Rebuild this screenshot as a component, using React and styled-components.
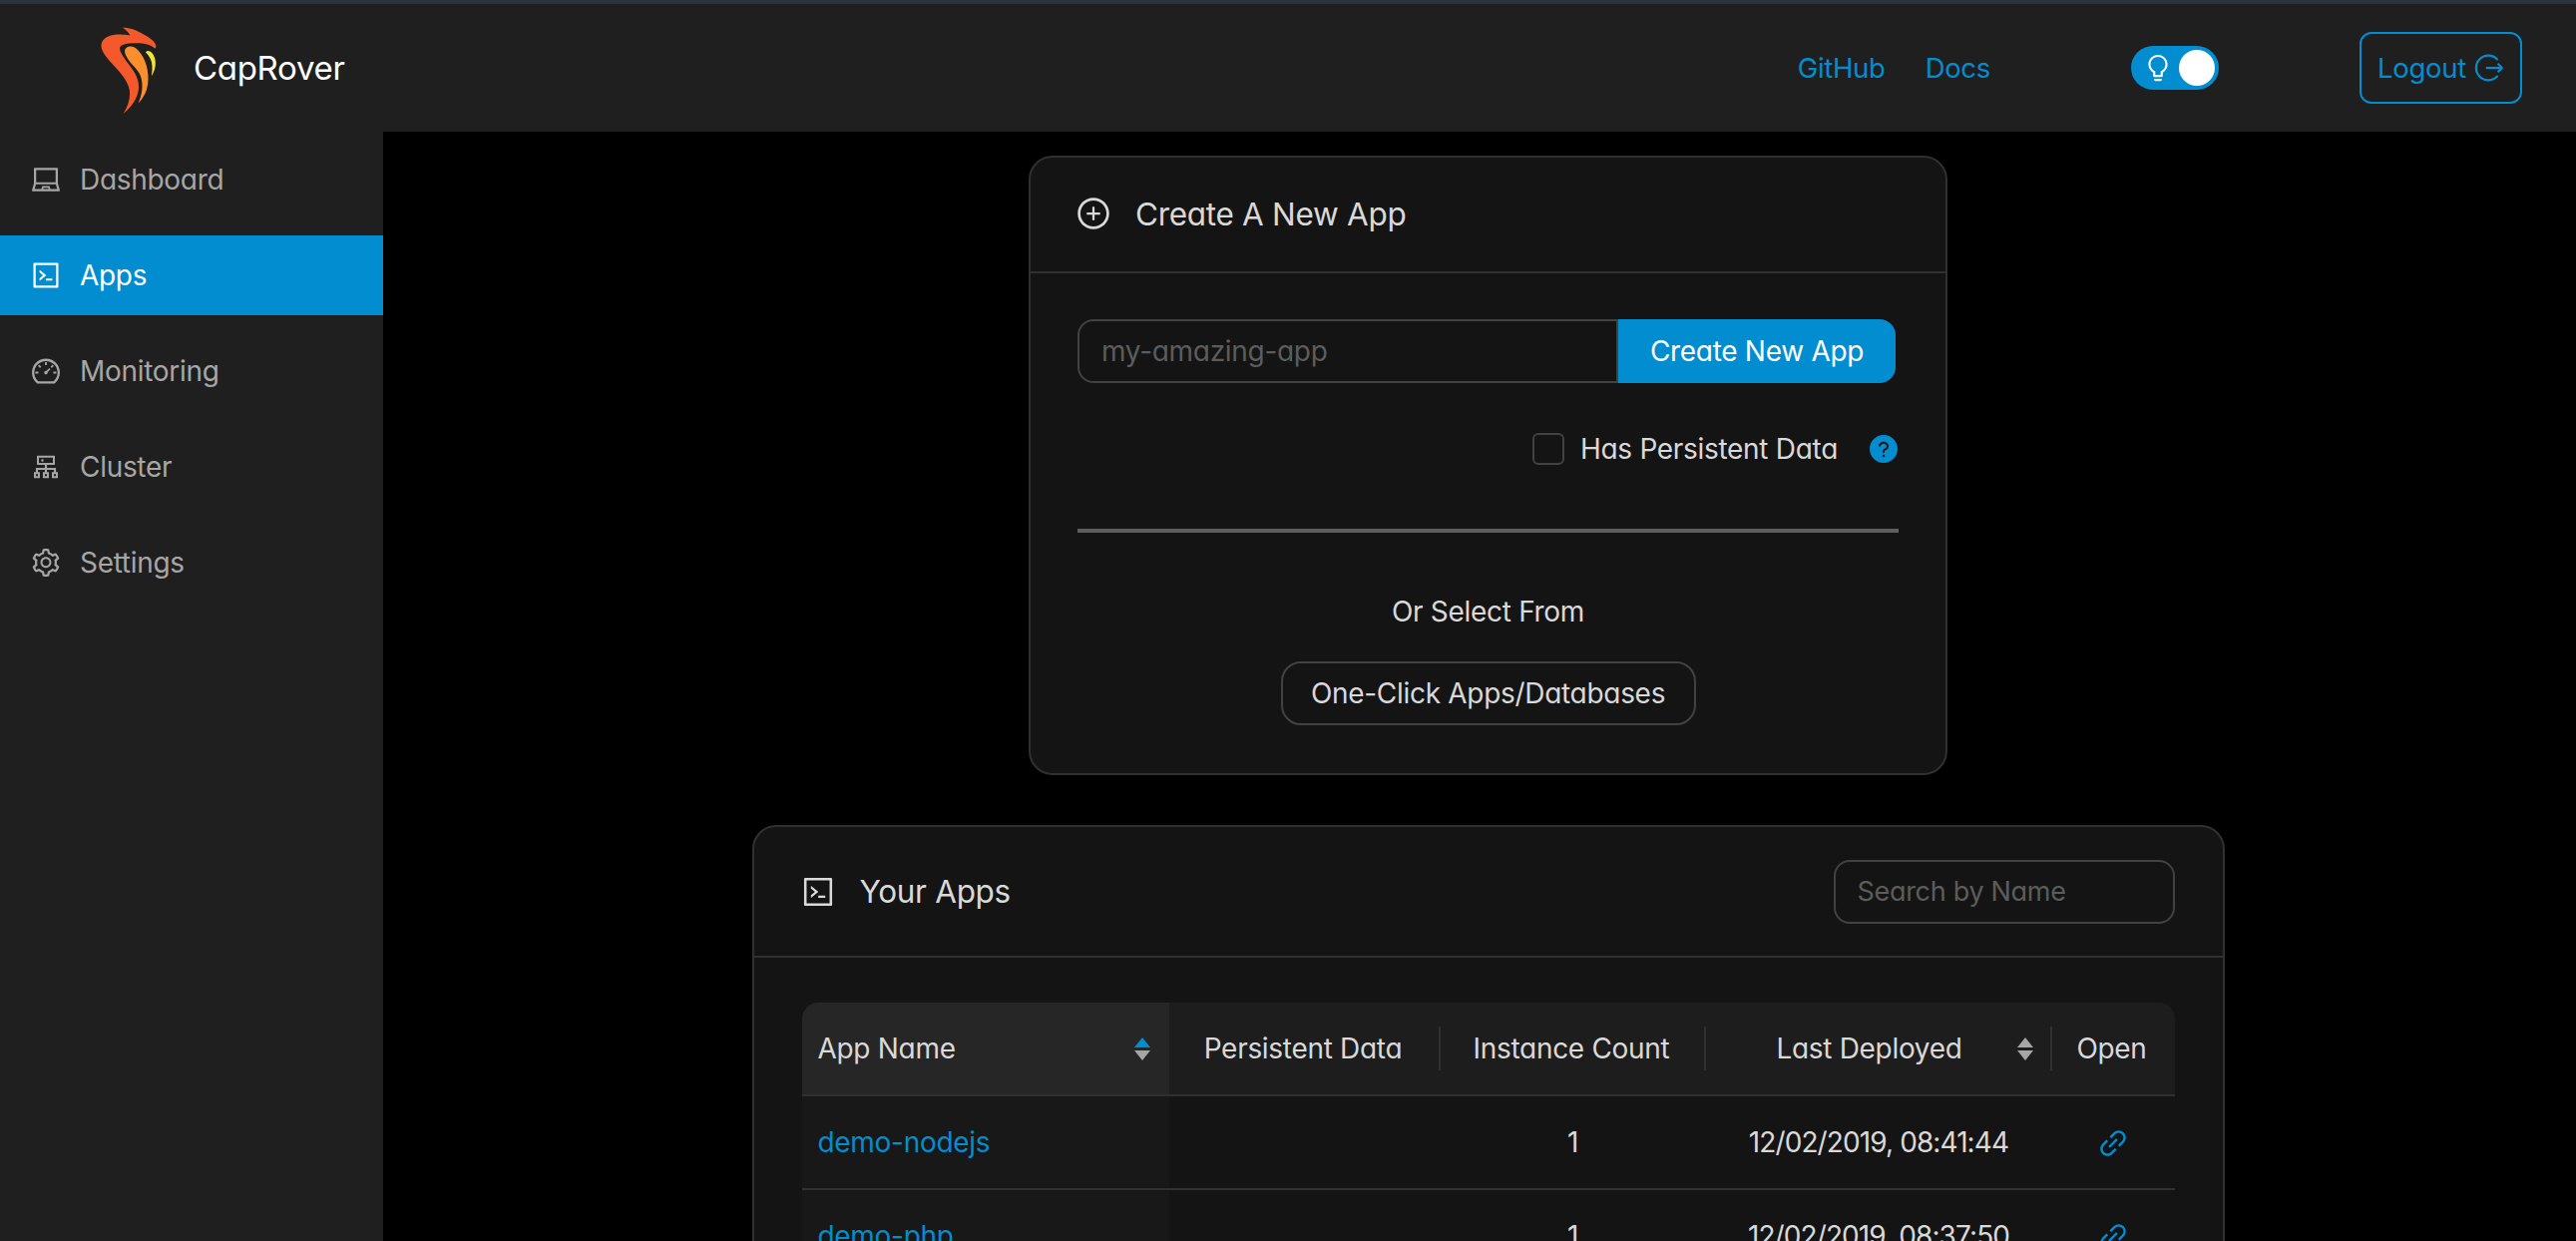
import React from 'react'
import styled, { createGlobalStyle } from 'styled-components'
import {
    AiOutlineLaptop,
    AiOutlineCode,
    AiOutlineDashboard,
    AiOutlineCluster,
    AiOutlineSetting,
    AiOutlinePlusCircle,
    AiOutlineBulb,
    AiOutlineLink,
    AiFillQuestionCircle,
} from 'react-icons/ai'

const BLUE = '#028dd1'

const GlobalStyle = createGlobalStyle`
    html, body {
        margin: 0;
        padding: 0;
        background: #000;
    }
    body {
        font-family: Inter, "Open Sans", sans-serif;
        font-feature-settings: "cv11" 1;
        font-weight: 400;
        font-size: 28px;
        letter-spacing: -0.3px;
        color: #d9d9d9;
    }
    input, button {
        font: inherit;
        font-feature-settings: inherit;
        letter-spacing: inherit;
    }
`

const Page = styled.div`
    height: 100vh;
    overflow: hidden;
    display: flex;
    flex-direction: column;
`
const TopStrip = styled.div`
    height: 4px;
    flex: none;
    background: #2b3240;
`
const Header = styled.header`
    height: 128px;
    flex: none;
    display: flex;
    align-items: center;
    background: #1f1f1f;
    padding: 0 54px 0 101px;
`
const Brand = styled.div`
    display: flex;
    align-items: center;
    gap: 37px;
    font-size: 33px;
    color: #fff;
    svg {
        margin-top: 5px;
    }
`
const HeaderLinks = styled.nav`
    margin-left: auto;
    display: flex;
    align-items: center;
    gap: 40px;
`
const HeaderLink = styled.a`
    color: ${BLUE};
    font-size: 27.5px;
`
const Toggle = styled.div`
    width: 88px;
    height: 44px;
    margin: 0 141px 0 141px;
    flex: none;
    display: flex;
    align-items: center;
    justify-content: space-between;
    padding: 0 4px 0 12px;
    box-sizing: border-box;
    border-radius: 22px;
    background: ${BLUE};
    color: #fff;
    font-size: 30px;
`
const Knob = styled.span`
    width: 36px;
    height: 36px;
    border-radius: 50%;
    background: #fff;
`
const LogoutButton = styled.button`
    width: 163px;
    height: 72px;
    display: flex;
    align-items: center;
    justify-content: center;
    gap: 8px;
    padding: 0;
    background: transparent;
    border: 2px solid ${BLUE};
    border-radius: 12px;
    color: ${BLUE};
    font-size: 27.5px;
`

const Body = styled.div`
    flex: 1;
    min-height: 0;
    display: flex;
`
const Sidebar = styled.aside`
    width: 384px;
    flex: none;
    background: #1f1f1f;
    padding-top: 8px;
    display: flex;
    flex-direction: column;
    gap: 16px;
`
const NavItem = styled.div`
    height: 80px;
    display: flex;
    align-items: center;
    gap: 18px;
    padding-left: 30px;
    color: ${p => (p.$active ? '#fff' : '#a6a6a6')};
    background: ${p => (p.$active ? BLUE : 'transparent')};
    svg {
        font-size: 32px;
    }
`
const Main = styled.main`
    flex: 1;
    min-width: 0;
    overflow: hidden;
    background: #000;
    padding: 24px 0 0 17px;
    display: flex;
    flex-direction: column;
    align-items: center;
    gap: 50px;
`
const Card = styled.section`
    flex: none;
    width: ${p => p.$width}px;
    box-sizing: border-box;
    background: #141414;
    border: 2px solid #303030;
    border-radius: 24px;
`
const CardHead = styled.div`
    height: ${p => p.$height}px;
    box-sizing: border-box;
    display: flex;
    align-items: center;
    gap: 24px;
    padding: 0 48px ${p => p.$lift || 0}px ${p => p.$left}px;
    border-bottom: 2px solid #303030;
    font-size: 31.5px;
    svg {
        font-size: 36px;
        flex: none;
    }
`
const CardBody = styled.div`
    padding: 46px 47px 48px;
    display: flex;
    flex-direction: column;
`
const InputGroup = styled.div`
    display: flex;
    width: 820px;
    height: 64px;
`
const TextInput = styled.input`
    flex: ${p => (p.$grow ? 1 : 'none')};
    width: ${p => (p.$grow ? 'auto' : '342px')};
    min-width: 0;
    height: 64px;
    box-sizing: border-box;
    padding: 0 22px;
    background: transparent;
    color: #d9d9d9;
    font-size: ${p => (p.$grow ? '28px' : '27px')};
    border: 2px solid #424242;
    border-radius: ${p => (p.$grow ? '16px 0 0 16px' : '16px')};
    outline: none;
    &::placeholder {
        color: #5c5c5c;
        opacity: 1;
    }
`
const PrimaryButton = styled.button`
    width: 278px;
    height: 64px;
    padding: 0;
    background: ${BLUE};
    color: #fff;
    border: 0;
    border-radius: 0 16px 16px 0;
`
const OptionRow = styled.div`
    margin-top: 50px;
    height: 32px;
    display: flex;
    align-items: center;
    justify-content: flex-end;
`
const CheckBox = styled.span`
    width: 32px;
    height: 32px;
    box-sizing: border-box;
    border: 2px solid #424242;
    border-radius: 6px;
    margin-right: 16px;
`
const HelpIcon = styled(AiFillQuestionCircle)`
    color: ${BLUE};
    font-size: 32px;
    margin-left: 30px;
    margin-right: -1px;
`
const Divider = styled.hr`
    width: 100%;
    height: 4px;
    margin: 64px 0 0;
    border: 0;
    background: #5f5f5f;
`
const OrText = styled.div`
    margin-top: 62px;
    text-align: center;
    line-height: 34px;
`
const OutlineButton = styled.button`
    align-self: center;
    width: 416px;
    height: 64px;
    margin-top: 33px;
    padding: 0;
    background: transparent;
    color: #d9d9d9;
    border: 2px solid #424242;
    border-radius: 20px;
`
const SearchBox = styled.div`
    margin-left: auto;
`
const TableBody = styled(CardBody)`
    padding: 45px 48px 48px;
`
const Table = styled.table`
    width: 1376px;
    table-layout: fixed;
    border-collapse: separate;
    border-spacing: 0;
`
const Th = styled.th`
    position: relative;
    width: ${p => p.$width}px;
    height: 94px;
    box-sizing: border-box;
    padding: 0 19px 0 16px;
    font-weight: 400;
    text-align: ${p => p.$align || 'center'};
    color: #d9d9d9;
    background: ${p => (p.$sorted ? '#262626' : '#1d1d1d')};
    border-bottom: 2px solid #303030;
    &:first-child {
        border-top-left-radius: 16px;
    }
    &:last-child {
        border-top-right-radius: 16px;
    }
    ${p =>
        p.$divider &&
        `&::after {
            content: '';
            position: absolute;
            right: 0;
            top: 24px;
            height: 44px;
            width: 2px;
            background: #303030;
        }`}
`
const ThInner = styled.div`
    display: flex;
    align-items: center;
    justify-content: space-between;
`
const ThLabel = styled.span`
    flex: 1;
`
const Td = styled.td`
    height: 94px;
    box-sizing: border-box;
    padding: 0 16px;
    text-align: ${p => p.$align || 'center'};
    letter-spacing: ${p => (p.$tight ? '-0.9px' : 'inherit')};
    background: ${p => (p.$sorted ? '#181818' : '#141414')};
    border-bottom: 2px solid #303030;
`
const BlueLink = styled.a`
    color: ${BLUE};
`
const LinkIcon = styled(AiOutlineLink)`
    color: ${BLUE};
    font-size: 34px;
    vertical-align: middle;
`
const Sorter = styled.span`
    display: inline-flex;
    flex-direction: column;
    gap: 3px;
`
const Caret = styled.i`
    width: 0;
    height: 0;
    border-left: 8px solid transparent;
    border-right: 8px solid transparent;
    ${p => (p.$up ? 'border-bottom' : 'border-top')}: 10px solid ${p => (p.$on ? BLUE : '#a6a6a6')};
`

const Logo = () => (
    <svg width="56" height="88" viewBox="62 50 168 265">
        <path
            fill="#f4592b"
            d="M128 52C150 52 172 60 190 72C208 82 224 92 228 106C229 112 227 116 224 114C212 104 195 99 170 99C150 99 128 100 120 110C116 120 126 135 140 155C160 180 178 205 176 235C174 265 155 290 130 312C146 285 152 262 148 238C143 212 118 185 95 160C72 135 58 115 65 97C72 80 95 72 125 73C136 73 146 75 150 75C145 65 136 58 128 52Z"
        />
        <path
            fill="#fb8f2d"
            d="M135 118C142 105 162 106 176 122C198 146 208 185 204 220C201 245 190 265 175 280C186 255 190 230 184 205C178 180 158 168 146 150C138 138 132 128 135 118Z"
        />
        <path
            fill="#f3e332"
            d="M197 126C205 118 218 124 224 142C230 160 226 182 215 198C218 178 218 160 212 147C208 138 202 132 197 126Z"
        />
    </svg>
)

const LogoutIcon = () => (
    <svg width="30" height="30" viewBox="0 0 28 28" fill="none" stroke="currentColor" strokeWidth="2">
        <path d="M21.5 6A11.5 11.5 0 1 0 21.5 22" strokeLinecap="round" />
        <path d="M11 14H26" />
        <path d="M22 10L26 14L22 18" strokeLinejoin="round" />
    </svg>
)

const navItems = [
    { label: 'Dashboard', icon: <AiOutlineLaptop /> },
    { label: 'Apps', icon: <AiOutlineCode />, active: true },
    { label: 'Monitoring', icon: <AiOutlineDashboard /> },
    { label: 'Cluster', icon: <AiOutlineCluster /> },
    { label: 'Settings', icon: <AiOutlineSetting /> },
]

const apps = [
    { name: 'demo-nodejs', count: 1, deployed: '12/02/2019, 08:41:44' },
    { name: 'demo-php', count: 1, deployed: '12/02/2019, 08:37:50' },
]

const SortCarets = ({ on }) => (
    <Sorter>
        <Caret $up $on={on} />
        <Caret />
    </Sorter>
)

const App = () => {
    return (
        <Page>
            <GlobalStyle />
            <TopStrip />
            <Header>
                <Brand>
                    <Logo />
                    CapRover
                </Brand>
                <HeaderLinks>
                    <HeaderLink>GitHub</HeaderLink>
                    <HeaderLink>Docs</HeaderLink>
                </HeaderLinks>
                <Toggle>
                    <AiOutlineBulb />
                    <Knob />
                </Toggle>
                <LogoutButton>
                    Logout
                    <LogoutIcon />
                </LogoutButton>
            </Header>
            <Body>
                <Sidebar>
                    {navItems.map(item => (
                        <NavItem key={item.label} $active={item.active}>
                            {item.icon}
                            {item.label}
                        </NavItem>
                    ))}
                </Sidebar>
                <Main>
                    <Card $width={921}>
                        <CardHead $height={116} $left={45} $lift={2}>
                            <AiOutlinePlusCircle />
                            Create A New App
                        </CardHead>
                        <CardBody>
                            <InputGroup>
                                <TextInput $grow placeholder="my-amazing-app" />
                                <PrimaryButton>Create New App</PrimaryButton>
                            </InputGroup>
                            <OptionRow>
                                <CheckBox />
                                Has Persistent Data
                                <HelpIcon />
                            </OptionRow>
                            <Divider />
                            <OrText>Or Select From</OrText>
                            <OutlineButton>One-Click Apps/Databases</OutlineButton>
                        </CardBody>
                    </Card>
                    <Card $width={1476}>
                        <CardHead $height={131} $left={46}>
                            <AiOutlineCode />
                            Your Apps
                            <SearchBox>
                                <TextInput placeholder="Search by Name" />
                            </SearchBox>
                        </CardHead>
                        <TableBody>
                            <Table>
                                <thead>
                                    <tr>
                                        <Th $width={368} $align="left" $sorted>
                                            <ThInner>
                                                App Name
                                                <SortCarets on />
                                            </ThInner>
                                        </Th>
                                        <Th $width={272} $divider>Persistent Data</Th>
                                        <Th $width={266} $divider>Instance Count</Th>
                                        <Th $width={347} $divider>
                                            <ThInner>
                                                <ThLabel>Last Deployed</ThLabel>
                                                <SortCarets />
                                            </ThInner>
                                        </Th>
                                        <Th $width={123}>Open</Th>
                                    </tr>
                                </thead>
                                <tbody>
                                    {apps.map(app => (
                                        <tr key={app.name}>
                                            <Td $align="left" $sorted>
                                                <BlueLink>{app.name}</BlueLink>
                                            </Td>
                                            <Td />
                                            <Td>{app.count}</Td>
                                            <Td $tight>{app.deployed}</Td>
                                            <Td>
                                                <LinkIcon />
                                            </Td>
                                        </tr>
                                    ))}
                                </tbody>
                            </Table>
                        </TableBody>
                    </Card>
                </Main>
            </Body>
        </Page>
    )
}

export default App
